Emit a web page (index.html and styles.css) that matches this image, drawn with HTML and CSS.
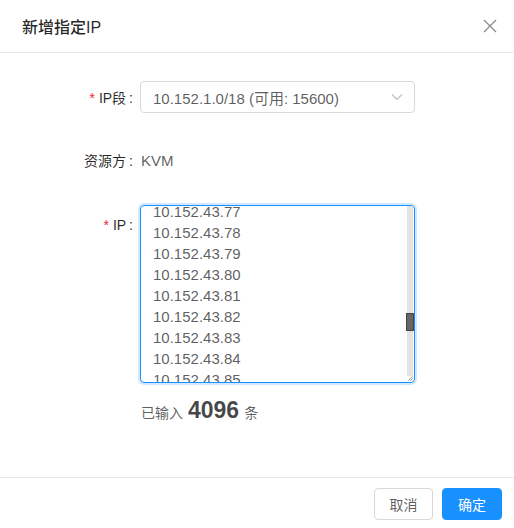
FILE: index.html
```html
<!DOCTYPE html>
<html lang="zh">
<head>
<meta charset="utf-8">
<title>新增指定IP</title>
<link rel="stylesheet" href="styles.css">
</head>
<body>
<div class="modal">
  <div class="modal-header">
    <div class="modal-title">新增指定IP</div>
    <svg class="close" width="14" height="14" viewBox="0 0 14 14"><path d="M1 1L13 13M13 1L1 13" stroke="#8c8c8c" stroke-width="1.3" fill="none"/></svg>
  </div>
  <div class="modal-body">
    <div class="form-row row-select">
      <div class="label"><span class="req">*</span>IP段<span class="colon">:</span></div>
      <div class="select">
        <span class="select-value">10.152.1.0/18 (可用: 15600)</span>
        <svg class="arrow" width="12" height="8" viewBox="0 0 12 8"><path d="M1 1.5L6 6.5L11 1.5" stroke="#bfbfbf" stroke-width="1.1" fill="none"/></svg>
      </div>
    </div>
    <div class="form-row row-text">
      <div class="label">资源方<span class="colon">:</span></div>
      <div class="value">KVM</div>
    </div>
    <div class="form-row row-ip">
      <div class="label label-top"><span class="req">*</span>IP<span class="colon">:</span></div>
      <div class="control">
        <div class="textarea">
          <div class="lines">
            <div>10.152.43.77</div>
            <div>10.152.43.78</div>
            <div>10.152.43.79</div>
            <div>10.152.43.80</div>
            <div>10.152.43.81</div>
            <div>10.152.43.82</div>
            <div>10.152.43.83</div>
            <div>10.152.43.84</div>
            <div>10.152.43.85</div>
          </div>
          <div class="scrollbar"><div class="thumb"></div></div>
          <svg class="resize" width="5" height="5" viewBox="0 0 5 5"><path d="M0.5 4.5L4.5 0.5M2.5 4.5L4.5 2.5" stroke="#777" stroke-width="0.8"/></svg>
        </div>
        <div class="count">已输入 <b>4096</b> 条</div>
      </div>
    </div>
  </div>
  <div class="modal-footer">
    <button class="btn">取消</button>
    <button class="btn btn-primary">确定</button>
  </div>
</div>
</body>
</html>
```
FILE: styles.css
```css
* { box-sizing: border-box; }
html, body { margin: 0; padding: 0; background: #fff; }
body {
  font-family: "Liberation Sans", "Noto Sans CJK SC", sans-serif;
  font-size: 14px;
  color: rgba(0,0,0,0.65);
}
.modal {
  width: 514px;
  height: 528px;
  display: flex;
  flex-direction: column;
}
.modal-header {
  height: 53px;
  border-bottom: 1px solid #e8e8e8;
  display: flex;
  align-items: center;
  justify-content: space-between;
  padding: 0 17px 0 22px;
}
.modal-title {
  font-size: 16px;
  font-weight: 500;
  color: rgba(0,0,0,0.85);
}
.close { display: block; }
.modal-body {
  flex: 1;
  padding-top: 28px;
}
.form-row {
  display: flex;
  align-items: center;
}
.label {
  width: 140px;
  padding-right: 7px;
  text-align: right;
  color: rgba(0,0,0,0.85);
  white-space: nowrap;
}
.req {
  color: #f5222d;
  margin-right: 4px;
  font-family: "Liberation Sans", sans-serif;
}
.colon { margin-left: 3px; }
.select {
  width: 275px;
  height: 32px;
  border: 1px solid #d9d9d9;
  border-radius: 4px;
  display: flex;
  align-items: center;
  justify-content: space-between;
  padding: 0 11px 0 12px;
}
.select-value {
  font-size: 15px;
  color: rgba(0,0,0,0.65);
}
.arrow { display: block; }
.row-text {
  margin-top: 35px;
  height: 24px;
}
.value {
  padding-left: 1px;
  font-size: 15px;
  color: rgba(0,0,0,0.65);
}
.row-ip {
  margin-top: 33px;
  align-items: flex-start;
}
.label-top { padding-top: 12px; }
.control { width: 275px; }
.textarea {
  position: relative;
  height: 178px;
  border: 1px solid #1890ff;
  border-radius: 4px;
  box-shadow: 0 0 0 2px rgba(24,144,255,0.2);
  overflow: hidden;
  padding-left: 12px;
}
.lines {
  margin-top: -5px;
  font-size: 15px;
  line-height: 21px;
  color: rgba(0,0,0,0.65);
}
.scrollbar {
  position: absolute;
  top: 0;
  right: 1px;
  width: 6px;
  height: 170px;
  background: #e3e3e3;
}
.thumb {
  position: absolute;
  left: -1px;
  top: 107px;
  width: 8px;
  height: 18px;
  background: #666;
  border: 1px solid #444;
}
.resize {
  position: absolute;
  right: 1px;
  bottom: 1px;
}
.count {
  margin-top: 14px;
  padding-left: 1px;
  color: rgba(0,0,0,0.65);
  display: flex;
  align-items: baseline;
  gap: 5px;
}
.count b {
  font-size: 23px;
  font-weight: 700;
  color: rgba(0,0,0,0.72);
}
.modal-footer {
  height: 51px;
  border-top: 1px solid #e8e8e8;
  display: flex;
  justify-content: flex-end;
  align-items: flex-start;
  padding: 10px 12px 0 0;
  gap: 9px;
}
.btn {
  height: 32px;
  width: 59px;
  border: 1px solid #d9d9d9;
  border-radius: 4px;
  background: #fff;
  font-family: "Liberation Sans", "Noto Sans CJK SC", sans-serif;
  font-size: 14px;
  color: rgba(0,0,0,0.65);
  padding: 0;
}
.btn-primary {
  width: 60px;
  background: #1890ff;
  border-color: #1890ff;
  color: #fff;
}
```
